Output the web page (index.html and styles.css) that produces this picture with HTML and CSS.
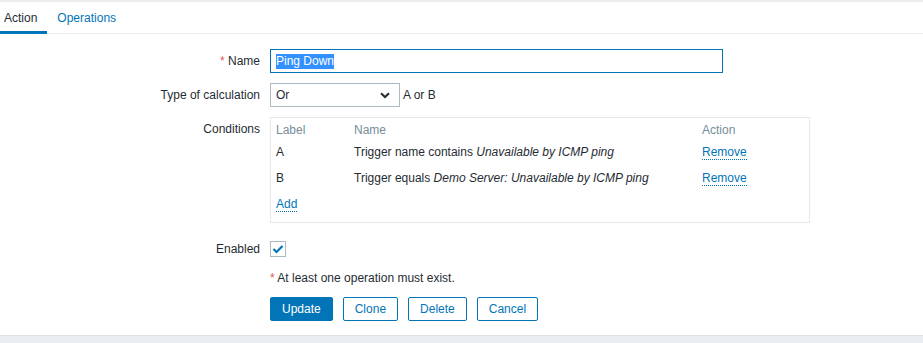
FILE: index.html
```html
<!DOCTYPE html>
<html>
<head>
<meta charset="utf-8">
<link rel="stylesheet" href="styles.css">
</head>
<body>
<div class="page">
  <div class="tabs">
    <span class="tab active">Action</span>
    <span class="tab link">Operations</span>
  </div>
  <div class="form">
    <div class="label"><span class="req">*</span> Name</div>
    <div class="field"><div class="input focused"><span class="sel">Ping Down</span></div></div>

    <div class="label">Type of calculation</div>
    <div class="field calc">
      <div class="select"><span>Or</span>
        <svg width="10" height="7" viewBox="0 0 10 7"><path d="M1 1.2 L5 5 L9 1.2" fill="none" stroke="#1f2c33" stroke-width="2"/></svg>
      </div>
      <span class="formula">A or B</span>
    </div>

    <div class="label top">Conditions</div>
    <div class="field">
      <div class="cond">
        <div class="crow head"><span>Label</span><span>Name</span><span>Action</span></div>
        <div class="crow"><span>A</span><span>Trigger name contains <i>Unavailable by ICMP ping</i></span><span><span class="lnk">Remove</span></span></div>
        <div class="crow"><span>B</span><span>Trigger equals <i>Demo Server: Unavailable by ICMP ping</i></span><span><span class="lnk">Remove</span></span></div>
        <div class="crow"><span><span class="lnk">Add</span></span></div>
      </div>
    </div>

    <div class="label enabled">Enabled</div>
    <div class="field enabled">
      <span class="checkbox"><svg width="12" height="10" viewBox="0 0 12 10"><path d="M1.5 5 L4.5 8 L10.5 2" fill="none" stroke="#0275b8" stroke-width="2.2"/></svg></span>
    </div>

    <div class="label note-label"></div>
    <div class="field note"><span class="req">*</span> At least one operation must exist.</div>

    <div class="label btn-label"></div>
    <div class="field buttons">
      <span class="btn primary">Update</span>
      <span class="btn">Clone</span>
      <span class="btn">Delete</span>
      <span class="btn">Cancel</span>
    </div>
  </div>
</div>
<div class="footer"></div>
</body>
</html>
```
FILE: styles.css
```css
html, body {
  margin: 0;
  padding: 0;
}
body {
  background: #ebeef0;
  font-family: "Liberation Sans", Arial, sans-serif;
  font-size: 12px;
  color: #1f2c33;
  padding-top: 2px;
  width: 923px;
  height: 343px;
  overflow: hidden;
}
.page {
  background: #fff;
  height: 333px;
  border-bottom: 1px solid #dfe4e7;
}
.tabs {
  display: flex;
  height: 32px;
  box-shadow: inset 0 -1px 0 #ebeef0;
  margin-left: -6px;
}
.tab {
  padding: 3px 10px 0 10px;
  line-height: 26px;
  height: 26px;
  border-bottom: 3px solid transparent;
}
.tab.active {
  border-bottom-color: #0275b8;
}
.tab.link {
  color: #0275b8;
}
.form {
  display: grid;
  grid-template-columns: 260px 1fr;
  column-gap: 10px;
  row-gap: 10px;
  padding-top: 15px;
}
.label {
  text-align: right;
  line-height: 24px;
  white-space: nowrap;
}
.req {
  color: #e45959;
}
.field {
  min-height: 24px;
}
.input {
  width: 441px;
  height: 22px;
  border: 1px solid #acbbc2;
  padding: 0 5px;
  display: flex;
  align-items: center;
}
.input.focused {
  border-color: #0275b8;
}
.sel {
  background: #3390ff;
  color: #fff;
  line-height: 15px;
}
.calc {
  display: flex;
  align-items: center;
}
.select {
  width: 114px;
  height: 22px;
  border: 1px solid #acbbc2;
  padding: 0 9px 0 5px;
  display: flex;
  align-items: center;
  justify-content: space-between;
}
.formula {
  margin-left: 3px;
}
.cond {
  width: 528px;
  border: 1px solid #e4e9ec;
  padding: 3px 5px 5px 5px;
}
.crow {
  display: grid;
  grid-template-columns: 78px 348px 1fr;
  height: 26px;
  align-items: center;
}
.crow.head {
  height: 18px;
  color: #768d99;
}
.lnk {
  color: #0275b8;
  border-bottom: 1px dotted #0275b8;
  line-height: 13px;
  display: inline-block;
}
.label.enabled {
  margin-top: 8px;
  line-height: 16px;
}
.field.enabled {
  margin-top: 8px;
  min-height: 16px;
}
.checkbox {
  display: flex;
  align-items: center;
  justify-content: center;
  width: 14px;
  height: 14px;
  border: 1px solid #acbbc2;
}
.field.note, .note-label {
  margin-top: 3px;
  min-height: 16px;
  line-height: 16px;
}
.buttons {
  display: flex;
  gap: 10px;
}
.buttons, .btn-label {
  margin-top: 1px;
}
.btn {
  height: 22px;
  line-height: 22px;
  border: 1px solid #0275b8;
  border-radius: 2px;
  color: #0275b8;
  background: #fff;
  padding: 0 11px;
}
.btn.primary {
  background: #0275b8;
  color: #fff;
}
.footer {
  height: 7px;
}
```
